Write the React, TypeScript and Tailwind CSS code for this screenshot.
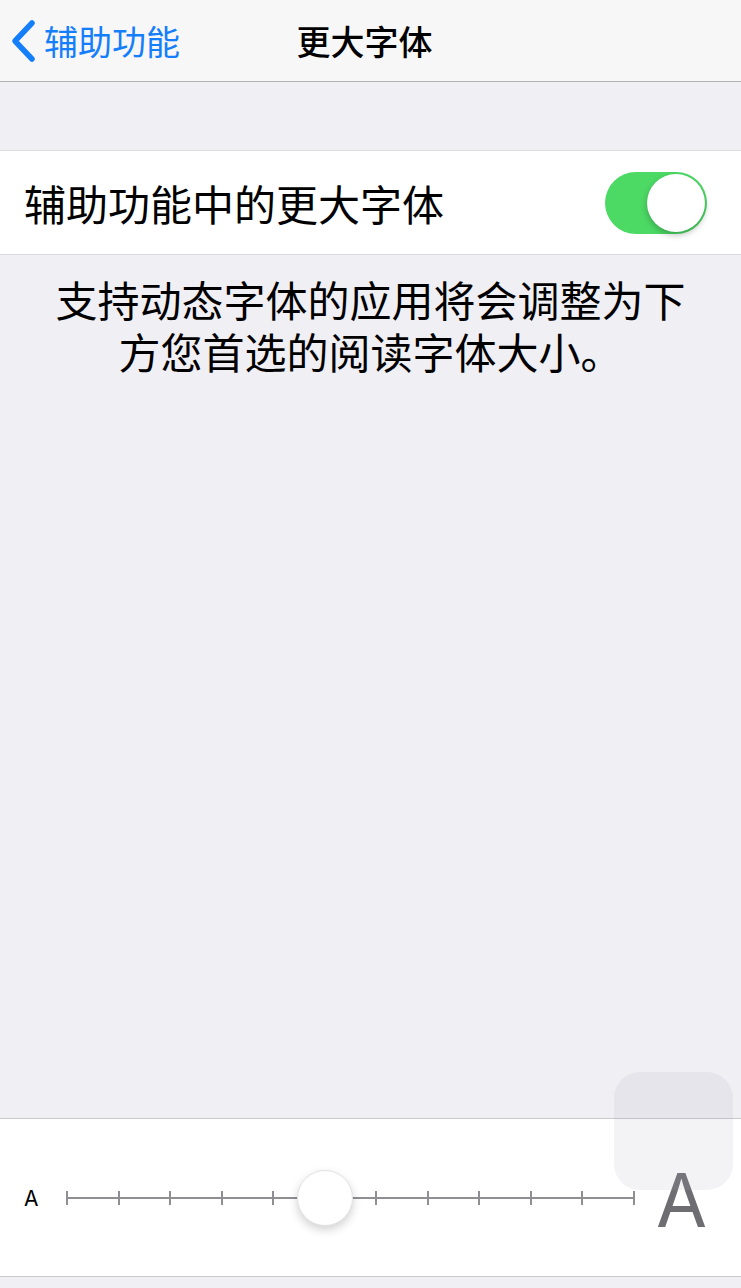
import React, { useState } from "react";

const cjk = { fontFamily: '"Noto Sans CJK SC", "Noto Sans", sans-serif' };
const latin = { fontFamily: 'Inter, "Noto Sans", sans-serif' };

const STEPS = 12;

const Toggle: React.FC<{ on: boolean; onChange: (v: boolean) => void }> = ({ on, onChange }) => (
  <button
    onClick={() => onChange(!on)}
    className={`relative w-[102px] h-[62px] rounded-full transition-colors ${on ? "bg-[#4cd964]" : "bg-[#e5e5ea]"}`}
  >
    <span
      className={`absolute top-[2px] w-[58px] h-[58px] rounded-full bg-white shadow-[0_3px_6px_rgba(0,0,0,0.25)] transition-all ${on ? "left-[42px]" : "left-[2px]"}`}
    />
  </button>
);

const SizeSlider: React.FC<{ value: number; onChange: (v: number) => void }> = ({ value, onChange }) => {
  const pct = (value / (STEPS - 1)) * 100;
  return (
    <div className="relative flex-1 h-[60px] flex items-center">
      <div className="relative w-full h-[14px]">
        <div className="absolute left-0 right-0 top-[6px] h-[2px] bg-[#8e8e93]" />
        <div className="absolute inset-0 flex justify-between">
          {Array.from({ length: STEPS }).map((_, i) => (
            <button
              key={i}
              onClick={() => onChange(i)}
              className="w-[2px] h-[14px] bg-[#8e8e93]"
            />
          ))}
        </div>
        <div
          className="absolute top-[7px] w-[56px] h-[56px] -ml-[28px] -mt-[28px] rounded-full bg-white border border-[#e2e2e2] shadow-[0_4px_10px_rgba(0,0,0,0.18)]"
          style={{ left: `${pct}%` }}
        />
      </div>
    </div>
  );
};

const App: React.FC = () => {
  const [larger, setLarger] = useState(true);
  const [size, setSize] = useState(5);

  return (
    <div className="relative w-[741px] h-[1288px] flex flex-col bg-[#efeff4] overflow-hidden" style={cjk}>
      {/* nav bar */}
      <div className="relative h-[82px] shrink-0 bg-[#f7f7f8] border-b border-[#b2b2b2] flex items-center">
        <button className="flex items-center pl-[10px] text-[#157efb]">
          <svg width="26" height="44" viewBox="0 0 26 44" fill="none">
            <path d="M22 4 L5 22 L22 40" stroke="#157efb" strokeWidth="5.5" strokeLinecap="round" strokeLinejoin="round" />
          </svg>
          <span className="ml-[8px] text-[34px] leading-none">辅助功能</span>
        </button>
        <div className="absolute left-0 right-0 top-0 h-[81px] flex items-center justify-center pointer-events-none">
          <span className="text-[34px] leading-none font-medium text-black -ml-[12px]">更大字体</span>
        </div>
      </div>

      <div className="h-[69px] shrink-0 border-b border-[#dcdce0]" />

      {/* switch row */}
      <div className="h-[104px] shrink-0 bg-white border-b border-[#d9d9dd] flex items-center justify-between pl-[24px] pr-[34px]">
        <span className="text-[42px] leading-none text-black">辅助功能中的更大字体</span>
        <Toggle on={larger} onChange={setLarger} />
      </div>

      <div className="flex-1 pt-[18px] px-[20px]">
        <p className="text-center text-[42px] leading-[52px] text-black whitespace-nowrap">
          支持动态字体的应用将会调整为下
          <br />
          方您首选的阅读字体大小。
        </p>
      </div>

      {/* size picker */}
      <div className="h-[159px] shrink-0 bg-white border-t border-b border-[#c8c8cc] flex items-center pl-[24px] pr-[34px]" style={latin}>
        <span className="w-[42px] text-[21px] leading-none text-black pt-[2px]">A</span>
        <SizeSlider value={size} onChange={setSize} />
        <span className="ml-[21px] text-[74px] leading-none text-[#6d6d72] font-normal pt-[4px]">A</span>
      </div>
      <div className="h-[11px] shrink-0" />

      {/* floating assistive button */}
      <div className="absolute left-[614px] top-[1072px] w-[119px] h-[118px] rounded-[26px] bg-[rgba(170,170,185,0.14)]" />
    </div>
  );
};

export default App;
